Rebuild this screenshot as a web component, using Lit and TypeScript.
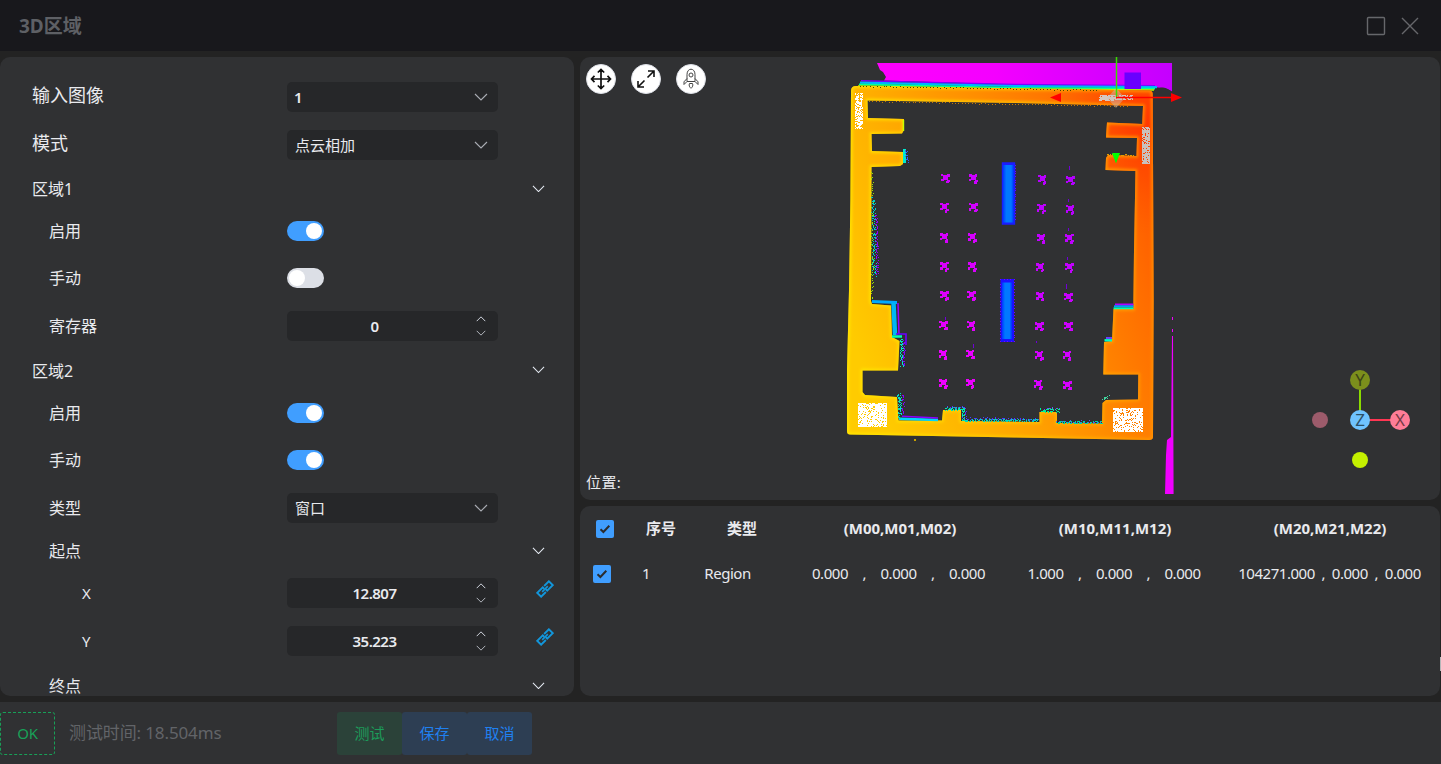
import { LitElement, html, css, svg } from "lit";
import { customElement } from "lit/decorators.js";
import { classMap } from "lit/directives/class-map.js";

type Kind = "select" | "switch" | "number" | "group";
interface Row {
  label: string;
  kind: Kind;
  indent: string;
  size: string;
  value?: string;
  on?: boolean;
  link?: boolean;
}

const ROWS: Row[] = [
  { label: "输入图像", kind: "select", indent: "root", size: "h48", value: "1" },
  { label: "模式", kind: "select", indent: "root", size: "h48", value: "点云相加" },
  { label: "区域1", kind: "group", indent: "lv0", size: "h39" },
  { label: "启用", kind: "switch", indent: "lv1", size: "h46", on: true },
  { label: "手动", kind: "switch", indent: "lv1", size: "h48", on: false },
  { label: "寄存器", kind: "number", indent: "lv1", size: "h48", value: "0" },
  { label: "区域2", kind: "group", indent: "lv0", size: "h40" },
  { label: "启用", kind: "switch", indent: "lv1", size: "h46", on: true },
  { label: "手动", kind: "switch", indent: "lv1", size: "h48", on: true },
  { label: "类型", kind: "select", indent: "lv1", size: "h48", value: "窗口" },
  { label: "起点", kind: "group", indent: "lv1", size: "h37" },
  { label: "X", kind: "number", indent: "lv2", size: "h48", value: "12.807", link: true },
  { label: "Y", kind: "number", indent: "lv2", size: "h48", value: "35.223", link: true },
  { label: "终点", kind: "group", indent: "lv1", size: "h41" },
];

const makeRandom = (seed: number) => () => {
  seed = (Math.imul(seed, 1664525) + 1013904223) >>> 0;
  return seed / 4294967296;
};

const speckle = (seed: number, x: number, y: number, w: number, h: number, density: number) => {
  const rnd = makeRandom(seed);
  let d = "";
  for (let j = 0; j < h; j++)
    for (let i = 0; i < w; i++) if (rnd() < density) d += `M${x + i} ${y + j}h1v1h-1z`;
  return d;
};

// Scatter of single points along a polyline, jittered sideways.
const dust = (seed: number, pts: number[][], spread: number, density: number) => {
  const rnd = makeRandom(seed);
  let d = "";
  for (let k = 0; k + 1 < pts.length; k++) {
    const [x0, y0] = pts[k];
    const [x1, y1] = pts[k + 1];
    const n = Math.max(1, Math.round(Math.hypot(x1 - x0, y1 - y0) * density));
    for (let i = 0; i < n; i++) {
      const t = i / n;
      const x = Math.round(x0 + (x1 - x0) * t + (rnd() - 0.5) * spread);
      const y = Math.round(y0 + (y1 - y0) * t + (rnd() - 0.5) * spread);
      d += `M${x} ${y}h1v1h-1z`;
    }
  }
  return d;
};

const OUTER =
  "M851 91Q851 86 856 86L1015 88.5L1150 90.5Q1152.7 91 1152.7 94L1153.7 300L1153 437Q1153 440 1149 440L1015 437.5L850 434.5Q847 434.5 847 431L847 370L849 290L850.4 200Z";
const INNER =
  "M867.5 100.5L1015 103L1143 106L1142.3 124L1107 122.5L1106 137.5L1137 138L1136.5 156L1108 155L1106 158L1105.5 170L1135.5 171L1134 250L1133.3 309L1113.5 309L1112 341L1104 342L1103.3 374.5L1138.3 374.5L1138 399.5L1106 400L1102.5 403L1102 423.5L1057 423L1057 412L1039.5 412L1039.5 422L961 421L961 410L943 410L942 420.5L898.5 420.5L897 397L865 395L862.5 392L862.5 370.5L898 370.5L899.5 341L892 337L891 305.5L872 304L871 301L871.5 167L900 166L903 164L903 152L872 151L871.5 134L902 133.5L904 130L904 119L868 118Z";

const blobs = () => {
  const rnd = makeRandom(77);
  const out: { d: string; c: string }[] = [];
  const cols = [
    { x0: 944.5, x1: 943, y: 178, c0: 205, c1: 240 },
    { x0: 973, x1: 969.5, y: 178, c0: 205, c1: 235 },
    { x0: 1041.5, x1: 1038, y: 179, c0: 185, c1: 215 },
    { x0: 1070, x1: 1066.6, y: 179.5, c0: 180, c1: 215 },
  ];
  for (const c of cols)
    for (let r = 0; r < 8; r++) {
      const t = r / 7;
      const x = Math.round(c.x0 + (c.x1 - c.x0) * t);
      const y = Math.round(c.y + r * 29.3);
      let d = `M${x - 2} ${y - 3}h5v5h-5z`;
      for (const [dx, dy] of [[-4, -4], [2, -4], [-4, 1], [2, 2], [1, 3]]) {
        const w = 2 + Math.round(rnd());
        const h = 2 + Math.round(rnd());
        d += `M${x + dx} ${y + dy}h${w}v${h}h-${w}z`;
      }
      out.push({ d, c: `rgb(${Math.round(c.c0 + (c.c1 - c.c0) * t)},0,255)` });
    }
  return out;
};

const chevron = (w: number, cls: string) => html`<svg class=${cls} width=${w} height=${w / 2 + 1} viewBox="0 0 14 8">
  <path d="M1 1L7 7L13 1" fill="none" stroke="currentColor" stroke-width="1.15" />
</svg>`;
const chevronUp = (w: number, cls: string) => html`<svg class=${cls} width=${w} height=${w / 2 + 1} viewBox="0 0 14 8">
  <path d="M1 7L7 1L13 7" fill="none" stroke="currentColor" stroke-width="1.4" />
</svg>`;

@customElement("point-cloud-view")
export class PointCloudView extends LitElement {
  static styles = css`
    :host { display: block; position: relative; height: 443px; background: #303133; border-radius: 10px; overflow: hidden; }
    .scene { display: block; }
    .tools { position: absolute; left: 6px; top: 7px; display: flex; gap: 15px; }
    .tool { width: 30px; height: 30px; box-sizing: border-box; border-radius: 50%; background: #fff; border: 1px solid #dcdfe6; display: grid; place-items: center; }
    .pos { position: absolute; left: 6px; bottom: 7px; font-size: 15px; line-height: 22px; color: #e9eaee; letter-spacing: 0.4px; }
    .axis { font: 17px "Noto Sans", sans-serif; text-anchor: middle; }
  `;

  render() {
    return html`
      <svg class="scene" width="860" height="443" viewBox="580 57 860 443">
        <defs>
          <linearGradient id="heat" gradientUnits="userSpaceOnUse" x1="850" y1="330" x2="1160" y2="215">
            <stop offset="0" stop-color="#ffcb00" /><stop offset=".28" stop-color="#ffb000" />
            <stop offset=".62" stop-color="#ff8c00" /><stop offset=".88" stop-color="#ff6c00" /><stop offset="1" stop-color="#ff5a00" />
          </linearGradient>
          <radialGradient id="topHeat" gradientUnits="userSpaceOnUse" cx="1152" cy="125" r="110">
            <stop offset="0" stop-color="#ff2800" stop-opacity=".75" /><stop offset="1" stop-color="#ff5000" stop-opacity="0" />
          </radialGradient>
          <linearGradient id="rim" gradientUnits="userSpaceOnUse" x1="850" y1="0" x2="1155" y2="0">
            <stop offset="0" stop-color="#ffee00" /><stop offset=".6" stop-color="#ffc800" /><stop offset="1" stop-color="#ff9800" />
          </linearGradient>
          <linearGradient id="mag" gradientUnits="userSpaceOnUse" x1="876" y1="0" x2="1172" y2="0">
            <stop offset="0" stop-color="#ff00ff" /><stop offset=".4" stop-color="#f400ff" /><stop offset="1" stop-color="#c400ff" />
          </linearGradient>
          <linearGradient id="bar" x1="0" x2="1" y1="0" y2="0">
            <stop offset="0" stop-color="#0038ff" /><stop offset=".3" stop-color="#0078ff" /><stop offset=".75" stop-color="#0078ff" /><stop offset="1" stop-color="#0030ff" />
          </linearGradient>
          <filter id="soft" x="-5%" y="-5%" width="110%" height="110%"><feGaussianBlur stdDeviation="1.4" /></filter>
          <clipPath id="frame"><path d="${OUTER}${INNER}" clip-rule="evenodd" /></clipPath>
        </defs>

        <path d="M877 63H1172V91.5Q1166 87.5 1158 87.5L1150 86L1015 84.5L884 80.5L886 77L883 72L880 70Z" fill="url(#mag)" />
        <g fill="none">
          <path d="M861 80.8L1015 84.4L1155 85.8" stroke="#7a00ff" stroke-width="1.5" />
          <path d="M860 82.6L1015 86L1157 87.2" stroke="#00b4ff" stroke-width="2.2" />
          <path d="M859 84.4L1015 87.8L1155 88.6" stroke="#00ff9a" stroke-width="1.6" />
          <path d="M858 86L1015 89L1154 90" stroke="#b4ff00" stroke-width="1.5" />
        </g>
        <path d="M1155 91Q1157 87.5 1163 87.5Q1168 88 1172 92V93H1153Z" fill="#303133" />

        <path d="${OUTER}${INNER}" fill="url(#heat)" fill-rule="evenodd" />
        <g clip-path="url(#frame)">
          <rect x="1030" y="60" width="140" height="190" fill="url(#topHeat)" />
          <path d="${OUTER}${INNER}" fill="none" stroke="url(#rim)" stroke-width="3.4" stroke-opacity=".8" filter="url(#soft)" />
        </g>
        <path d=${dust(4, [[860, 86], [1100, 90]], 1, 0.3)} fill="#4b4a00" />
        <path d=${dust(5, [[869, 101], [1015, 104], [1130, 106]], 1, 0.3)} fill="#c87800" />

        <g fill="none">
          <path d="M872 301.5L897 302.5" stroke="#00aaff" stroke-width="3" />
          <path d="M893.5 303L895 335" stroke="#00b7f5" stroke-width="4.5" />
          <path d="M898 303L899 334" stroke="#9b00ff" stroke-width="1.5" />
          <path d="M892 336.5H902" stroke="#00ffb0" stroke-width="2.5" />
          <path d="M896 334H906V345" stroke="#6a00ff" stroke-width="1.6" />
          <path d="M899 418.8L938 420" stroke="#00d5ff" stroke-width="2.4" />
          <path d="M902 416.3L938 418" stroke="#8a00ff" stroke-width="1.4" />
          <path d="M1115 304.5H1133.4" stroke="#b000ff" stroke-width="2" />
          <path d="M1114 306.3H1133.4" stroke="#009dff" stroke-width="2" />
          <path d="M1113.5 308.3H1133.4" stroke="#00ffb0" stroke-width="1.8" />
          <path d="M1106 338H1112" stroke="#6a40ff" stroke-width="2" />
          <path d="M1104.5 340.3H1112" stroke="#00ffc8" stroke-width="2.4" />
          <path d="M904.5 149V163" stroke="#00e8d0" stroke-width="3" />
          <path d="M903.5 120V131" stroke="#c8ff00" stroke-width="1.4" />
        </g>
        <path d=${dust(11, [[872, 172], [872, 210], [872, 300]], 2, 0.5)} fill="#9be000" />
        <path d=${dust(12, [[873, 198], [874, 235], [874, 275]], 4, 1.5)} fill="#00cfc8" />
        <path d=${dust(13, [[876, 215], [877, 275]], 2, 1.2)} fill="#9000ff" />
        <path d=${dust(14, [[901, 340], [902, 366]], 4, 2.6)} fill="#00e8c0" />
        <path d=${dust(15, [[904, 340], [903, 366]], 2, 1.2)} fill="#7a00ff" />
        <path d=${dust(16, [[899, 394], [900, 418]], 4, 3)} fill="#00dfc8" />
        <path d=${dust(17, [[903, 394], [903, 414]], 2, 0.9)} fill="#8a00ff" />
        <path d=${dust(18, [[946, 409], [963, 408], [963, 420]], 3, 3)} fill="#00e8b4" />
        <path d=${dust(19, [[948, 407], [965, 407], [965, 417]], 2, 0.7)} fill="#5a30ff" />
        <path d=${dust(20, [[963, 420], [1038, 420]], 3, 2.3)} fill="#00d8c0" />
        <path d=${dust(21, [[963, 418], [1038, 419]], 2, 0.7)} fill="#4a40ff" />
        <path d=${dust(22, [[1041, 410], [1058, 410]], 4, 3)} fill="#00f09a" />
        <path d=${dust(23, [[1057, 422], [1102, 422]], 3, 2)} fill="#00d8a8" />
        <path d=${dust(24, [[1057, 421], [1102, 421]], 3, 0.4)} fill="#5a50ff" />
        <path d=${dust(28, [[1045, 408], [1060, 408]], 2, 0.6)} fill="#7a40ff" />
        <path d=${dust(25, [[906, 150], [907, 162]], 2, 1.2)} fill="#3060ff" />
        <path d=${dust(26, [[1103, 399], [1108, 396]], 3, 2)} fill="#40d8a0" />
        <path d=${dust(27, [[1107, 154], [1135, 155]], 1, 0.6)} fill="#e0a000" />

        <path d="M1001.8 162.3H1015.2V224.8H1001.8Z" fill="#1a1cff" />
        <path d="M1003 165H1013.8V222.5H1003Z" fill="url(#bar)" />
        <path d="M1000.5 279H1014V342H1000.5Z" fill="#1a10ff" />
        <path d="M1002 282.5H1012V339H1002Z" fill="url(#bar)" />
        <path d=${dust(31, [[1015, 165], [1015, 222]], 1, 0.35)} fill="#7000ff" />
        <path d=${dust(32, [[1000, 279], [1014, 279], [1014, 341], [1000, 341], [1000, 281]], 1, 0.3)} fill="#8000ff" />

        ${blobs().map((b) => svg`<path d=${b.d} fill=${b.c} />`)}
        <path d="M1069 166h1v4h-1zM1068 199h1v3h-1zM1068 228h1v3h-1zM1067 257h1v3h-1zM1066 284h1v5h-1zM973 344h1v4h-1zM945 317h1v3h-1zM1036 341h1v2h-1z" fill="#7000d8" />
        <path d="M914 439h2v2h-2z" fill="#c8a000" />

        <path d=${speckle(41, 855, 93, 8, 36, 0.62)} fill="#fff" />
        <path d=${speckle(42, 858, 403, 29, 24, 0.84)} fill="#fff" />
        <path d=${speckle(43, 1113, 408, 30, 24, 0.8)} fill="#fff" />
        <path d=${speckle(44, 1142, 127, 8, 37, 0.85)} fill="#c9c1bd" />
        <path d=${speckle(45, 1100, 95, 33, 5, 0.8)} fill="#d6c8c0" />
        <path d=${speckle(46, 1099, 97, 15, 4, 0.75)} fill="#d6c8c0" />

        <path d="M1172 317h1v3h-1zM1172 329h1v3h-1zM1172 336H1173L1173.6 494H1165L1166 455L1167 440L1171 437Z" fill="#f000ff" />

        <rect x="1124.5" y="72.5" width="16.5" height="16.5" fill="#6a00ff" />
        <path d="M1116 88L1125 98L1116 108L1107 98Z" fill="#c8c0bc" fill-opacity=".45" />
        <path d="M1116.5 57V97" stroke="#3bdc00" stroke-width="1.5" />
        <path d="M1116 97.5H1172" stroke="#ff0000" stroke-width="1.3" />
        <path d="M1050 97.5L1061 93V102ZM1182 97.5L1171 93V102Z" fill="#ff0000" />
        <path d="M1112 153H1120L1116 163.5Z" fill="#00ff00" />

        <g>
          <path d="M1360 388V412" stroke="#8adb00" stroke-width="2" />
          <path d="M1368 420H1392" stroke="#ff3653" stroke-width="2" />
          <circle cx="1360" cy="380" r="10" fill="#7c8f1c" />
          <circle cx="1360" cy="420" r="10" fill="#6fc3ff" />
          <circle cx="1400" cy="420" r="10" fill="#ff7d97" />
          <circle cx="1320" cy="420" r="8" fill="#9c5b6b" />
          <circle cx="1360" cy="460" r="8" fill="#c4f000" />
          <text class="axis" x="1360" y="386" fill="#3d4517">Y</text>
          <text class="axis" x="1360" y="426" fill="#2c5068">Z</text>
          <text class="axis" x="1400" y="426" fill="#753a46">X</text>
        </g>
      </svg>
      <div class="tools">
        <div class="tool">
          <svg width="22" height="22" viewBox="0 0 22 22" fill="none" stroke="#111" stroke-width="1.7">
            <path d="M11 1.5V20.5M1.5 11H20.5M7.8 4.5L11 1.5L14.2 4.5M7.8 17.5L11 20.5L14.2 17.5M4.5 7.8L1.5 11L4.5 14.2M17.5 7.8L20.5 11L17.5 14.2" />
          </svg>
        </div>
        <div class="tool">
          <svg width="20" height="20" viewBox="0 0 20 20" fill="none" stroke="#111" stroke-width="1.6">
            <path d="M11.5 8.5L18 2M12 2H18V8M8.5 11.5L2 18M2 12V18H8" />
          </svg>
        </div>
        <div class="tool">
          <svg width="18" height="22" viewBox="0 0 18 22" fill="none" stroke="#444" stroke-width="1">
            <path d="M5 13.5V6.5C5 3 7 1.2 9 1.2S13 3 13 6.5V13.5ZM5 10.5L2 13.8V16.5L5 13.5M13 10.5L16 13.8V16.5L13 13.5" />
            <circle cx="9" cy="7" r="2" />
            <path d="M7.5 15.5C6.6 17.5 7.5 19 9 20.3C10.5 19 11.4 17.5 10.5 15.5Z" />
          </svg>
        </div>
      </div>
      <div class="pos">位置:</div>
    `;
  }
}

@customElement("matrix-table")
export class MatrixTable extends LitElement {
  static styles = css`
    :host { display: block; height: 190px; background: #303133; border-radius: 10px; font-size: 15px; color: #e9eaee; overflow: hidden; }
    .line { display: grid; height: 45px; place-items: center; line-height: 20px; }
    .head { grid-template-columns: 50px 62px 100px 216px 214px 216px; font-weight: 700; padding-top: 1px; }
    .body { grid-template-columns: 45px 42px 121px 221px 210px 221px; letter-spacing: -0.47px; }
    .line > :not(.check) { padding-bottom: 4px; }
    .check { width: 18px; height: 18px; margin-bottom: 1px; border-radius: 2px; background: #409eff; display: grid; place-items: center; }
    .body .check { margin: 0 1px 2px 0; }
    .triple { display: flex; }
    .sep { width: 32.5px; text-align: center; }
    .sep.tight { width: 17px; }
  `;
  private check() {
    return html`<span class="check"><svg width="12" height="10" viewBox="0 0 12 10">
      <path d="M1.5 5.2L4.4 8L10.3 1.8" fill="none" stroke="#2b2d30" stroke-width="2" /></svg></span>`;
  }
  private triple(v: string[], tight = false) {
    const sep = html`<span class=${classMap({ sep: true, tight })}>,</span>`;
    return html`<span class="triple"><span>${v[0]}</span>${sep}<span>${v[1]}</span>${sep}<span>${v[2]}</span></span>`;
  }
  render() {
    return html`
      <div class="line head">
        ${this.check()}<span>序号</span><span>类型</span>
        <span>(M00,M01,M02)</span><span>(M10,M11,M12)</span><span>(M20,M21,M22)</span>
      </div>
      <div class="line body">
        ${this.check()}<span>1</span><span>Region</span>
        ${this.triple(["0.000", "0.000", "0.000"])}
        ${this.triple(["1.000", "0.000", "0.000"])}
        ${this.triple(["104271.000", "0.000", "0.000"], true)}
      </div>
    `;
  }
}

@customElement("app-root")
export class AppRoot extends LitElement {
  static styles = css`
    :host {
      display: grid; grid-template-rows: 51px 639px 62px; row-gap: 6px; position: relative;
      width: 1441px; height: 764px; background: #232323; overflow: hidden;
      font-family: "Noto Sans", "Noto Sans CJK SC", sans-serif; color: #e9eaee;
    }
    .title { background: #18181c; display: flex; align-items: center; justify-content: space-between; padding: 0 21px 0 19px; }
    .title h1 { margin: 0; font-size: 19px; font-weight: 700; color: #5e6065; line-height: 24px; }
    .win { display: flex; gap: 14px; align-items: center; color: #66676b; }
    .main { display: grid; grid-template-columns: 574px 860px; column-gap: 6px; }
    .form { background: #303133; border-radius: 10px; height: 639px; box-sizing: border-box; overflow: hidden; padding-top: 16px; }
    .right { display: grid; grid-template-rows: 443px 190px; row-gap: 6px; }
    .row { display: grid; grid-template-columns: 287px 211px 76px; align-items: center; }
    .h37 { height: 37px; } .h39 { height: 39px; } .h40 { height: 40px; }
    .h41 { height: 41px; } .h46 { height: 46px; } .h48 { height: 48px; }
    .label { font-size: 16px; line-height: 24px; white-space: nowrap; }
    .h40 .label { padding-top: 2px; }
    .root { padding-left: 32px; font-size: 18px; padding-bottom: 4px; }
    .lv0 { padding-left: 32px; }
    .lv1 { padding-left: 49px; }
    .lv2 { padding-left: 82px; font-size: 15px; }
    .box { height: 30px; border-radius: 5px; background: #262729; display: flex; align-items: center; font-size: 15px; line-height: 20px; font-weight: 600; }
    .select { justify-content: space-between; padding: 0 10px 0 8px; font-weight: 400; }
    .digit { font-weight: 600; margin-left: -1px; }
    .num { letter-spacing: -0.5px; }
    .num .val { flex: 1; text-align: center; padding-right: 2px; }
    .spin { width: 34px; display: flex; flex-direction: column; gap: 8px; align-items: center; color: #cfd3dc; padding-bottom: 1px; }
    .dim { color: #a8abb2; }
    .sw { width: 37px; height: 20px; border-radius: 10px; background: #dcdfe6; display: flex; align-items: center; padding: 0 2px; box-sizing: border-box; }
    .sw.on { background: #409eff; justify-content: flex-end; }
    .knob { width: 16px; height: 16px; border-radius: 50%; background: #fff; }
    .fold { grid-column: 3; justify-self: start; margin-left: 33.5px; color: #e5eaf3; display: block; }
    .link { grid-column: 3; justify-self: start; margin-left: 38px; margin-bottom: 9px; display: block; }
    .foot { background: #303133; display: flex; align-items: center; }
    .ok { width: 55px; height: 43px; box-sizing: border-box; border: 1px dashed #18a058; border-radius: 3px; color: #18a058; display: grid; place-items: center; font-size: 15px; letter-spacing: -0.3px; }
    .time { margin-left: 14px; width: 268px; font-size: 17px; color: #626468; letter-spacing: -0.12px; white-space: nowrap; line-height: 24px; }
    .btn { width: 65px; height: 43px; box-sizing: border-box; padding-bottom: 2px; border-radius: 3px; display: grid; place-items: center; font-size: 15px; background: #2d3e53; color: #2080f0; }
    .btn.green { background: #2b4239; color: #1c9c5a; }
    .edge { position: absolute; right: 0; top: 657px; width: 1px; height: 14px; background: #b5b6b8; }
  `;

  private control(r: Row) {
    if (r.kind === "select")
      return html`<div class="box select"><span class=${classMap({ digit: r.value === "1" })}>${r.value}</span>${chevron(14, "dim")}</div>`;
    if (r.kind === "switch")
      return html`<div class=${classMap({ sw: true, on: !!r.on })}><span class="knob"></span></div>`;
    if (r.kind === "number")
      return html`<div class="box num"><span class="val">${r.value}</span><span class="spin">${chevronUp(10, "")}${chevron(10, "")}</span></div>`;
    return chevron(13, "fold");
  }

  private link() {
    return html`<svg class="link" width="18" height="18" viewBox="0 0 18 18" fill="none" stroke="#1296db" stroke-width="1.9">
      <g transform="rotate(-45 9 9)">
        <path d="M7.5 11.7H0.8V6.3H8.6V8.4" /><path d="M10.5 6.3H17.2V11.7H9.4V9.6" /><path d="M5 9H13" stroke-width="1.6" />
      </g>
    </svg>`;
  }

  render() {
    return html`
      <header class="title">
        <h1>3D区域</h1>
        <div class="win">
          <svg width="20" height="20" viewBox="0 0 20 20"><rect x="1.5" y="1.5" width="17" height="17" rx="1" fill="none" stroke="currentColor" stroke-width="1.4" /></svg>
          <svg width="20" height="20" viewBox="0 0 20 20"><path d="M2 2L18 18M18 2L2 18" stroke="currentColor" stroke-width="1.4" /></svg>
        </div>
      </header>
      <main class="main">
        <section class="form">
          ${ROWS.map((r) => html`<div class="row ${r.size}">
            <span class="label ${r.indent}">${r.label}</span>${this.control(r)}${r.link ? this.link() : ""}
          </div>`)}
        </section>
        <section class="right">
          <point-cloud-view></point-cloud-view>
          <matrix-table></matrix-table>
        </section>
      </main>
      <footer class="foot">
        <span class="ok">OK</span>
        <span class="time">测试时间: 18.504ms</span>
        <span class="btn green">测试</span><span class="btn">保存</span><span class="btn">取消</span>
      </footer>
      <span class="edge"></span>
    `;
  }
}
